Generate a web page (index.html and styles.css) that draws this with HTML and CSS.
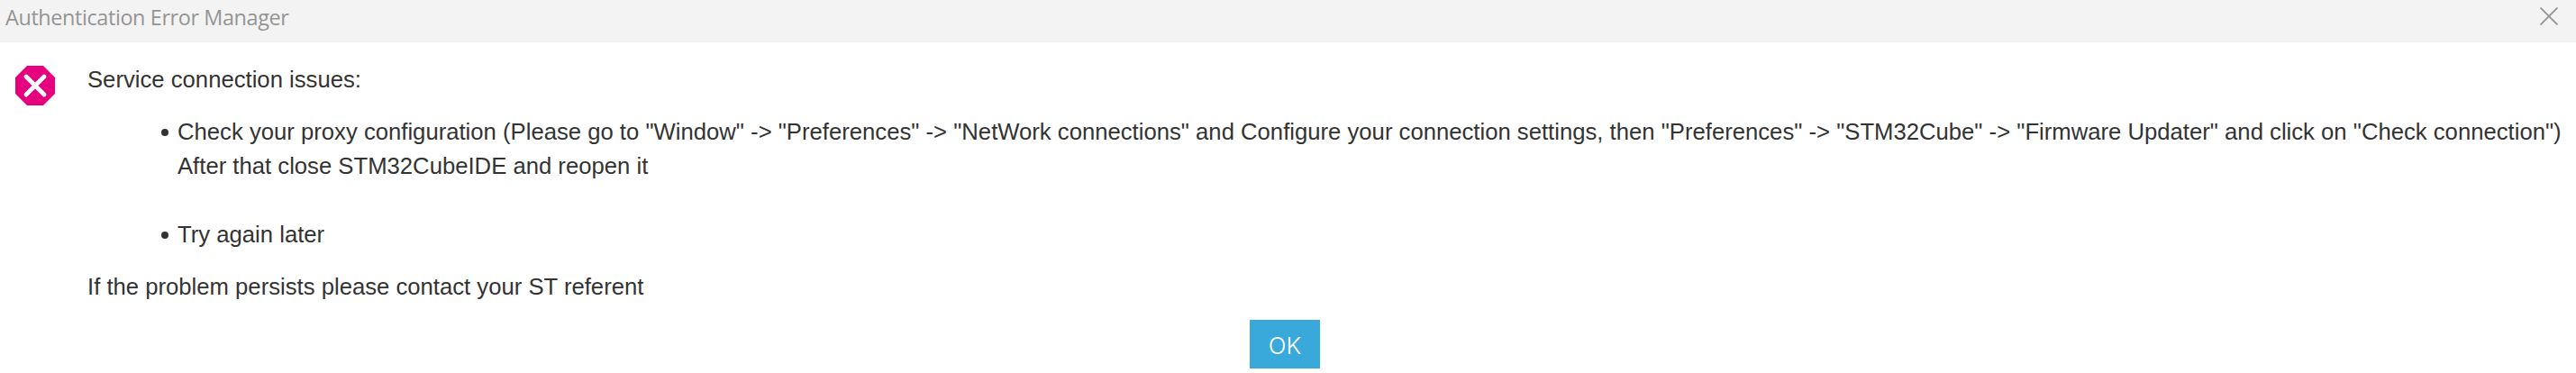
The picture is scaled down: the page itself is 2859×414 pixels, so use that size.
FILE: index.html
```html
<!DOCTYPE html>
<html lang="en">
<head>
    <meta charset="UTF-8">
    <meta name="viewport" content="width=device-width, initial-scale=1.0">
    <title>Authentication Error Manager</title>
    <link rel="stylesheet" href="styles.css">
</head>
<body>
    <div class="dialog">
        <header>
            <h1>Authentication Error Manager</h1>
            <button class="close" aria-label="Close">
                <svg width="20" height="20" viewBox="0 0 20 20">
                    <path d="M0.5 0.5L19.5 19.5M19.5 0.5L0.5 19.5" fill="none" stroke="#959595" stroke-width="1.9"/>
                </svg>
            </button>
        </header>
        <main>
            <svg class="error-icon" width="44" height="44" viewBox="0 0 44 44">
                <path d="M13 0H31L44 13V31L31 44H13L0 31V13Z" fill="#e6007e"/>
                <path d="M12 12L32 32M32 12L12 32" fill="none" stroke="#fff" stroke-width="4.8" stroke-linecap="round"/>
            </svg>
            <div class="message">
                <p>Service connection issues:</p>
                <ul>
                    <li>Check your proxy configuration (Please go to "Window" -&gt; "Preferences" -&gt; "NetWork connections" and Configure your connection settings, then "Preferences" -&gt; "STM32Cube" -&gt; "Firmware Updater" and click on "Check connection")<br>After that close STM32CubeIDE and reopen it</li>
                    <li>Try again later</li>
                </ul>
                <p>If the problem persists please contact your ST referent</p>
            </div>
        </main>
        <footer>
            <button class="ok">OK</button>
        </footer>
    </div>
</body>
</html>
```
FILE: styles.css
```css
*{
    margin: 0;
    padding: 0;
    box-sizing: border-box;
}
body{
    font-family: "Liberation Sans", Arial, sans-serif;
    background-color: #fff;
    color: #333;
    overflow: hidden;
}
.dialog{
    display: flex;
    flex-direction: column;
    height: 414px;
}
header{
    display: flex;
    justify-content: space-between;
    height: 47px;
    padding: 0 20px 0 6px;
    background-color: #f3f3f3;
}
header h1{
    font-family: "Open Sans", sans-serif;
    font-size: 23.4px;
    font-weight: 400;
    line-height: 39px;
    letter-spacing: -0.38px;
    color: #959595;
}
button{
    border: none;
    background: none;
}
.close{
    width: 20px;
    height: 20px;
    margin-top: 8px;
}
.close svg{
    display: block;
}
main{
    display: flex;
    padding: 22px 0 0 17px;
}
.error-icon{
    flex: none;
    margin: 4px 36px 0 0;
}
.message{
    font-size: 25.68px;
    line-height: 38px;
    white-space: nowrap;
}
.message ul{
    margin: 20px 0;
    padding-left: 100px;
    list-style: none;
}
.message li::before{
    content: "";
    float: left;
    width: 8px;
    height: 8px;
    margin: 16px 0 0 -18px;
    border-radius: 50%;
    background-color: #333;
}
.message li + li{
    margin-top: 38px;
}
footer{
    display: flex;
    margin-top: 18px;
    padding-left: 1387px;
}
.ok{
    width: 78px;
    height: 54px;
    padding-top: 3px;
    font-family: Inter, sans-serif;
    font-size: 26px;
    font-weight: 300;
    color: #fff;
    background-color: #39a9dc;
}
```
